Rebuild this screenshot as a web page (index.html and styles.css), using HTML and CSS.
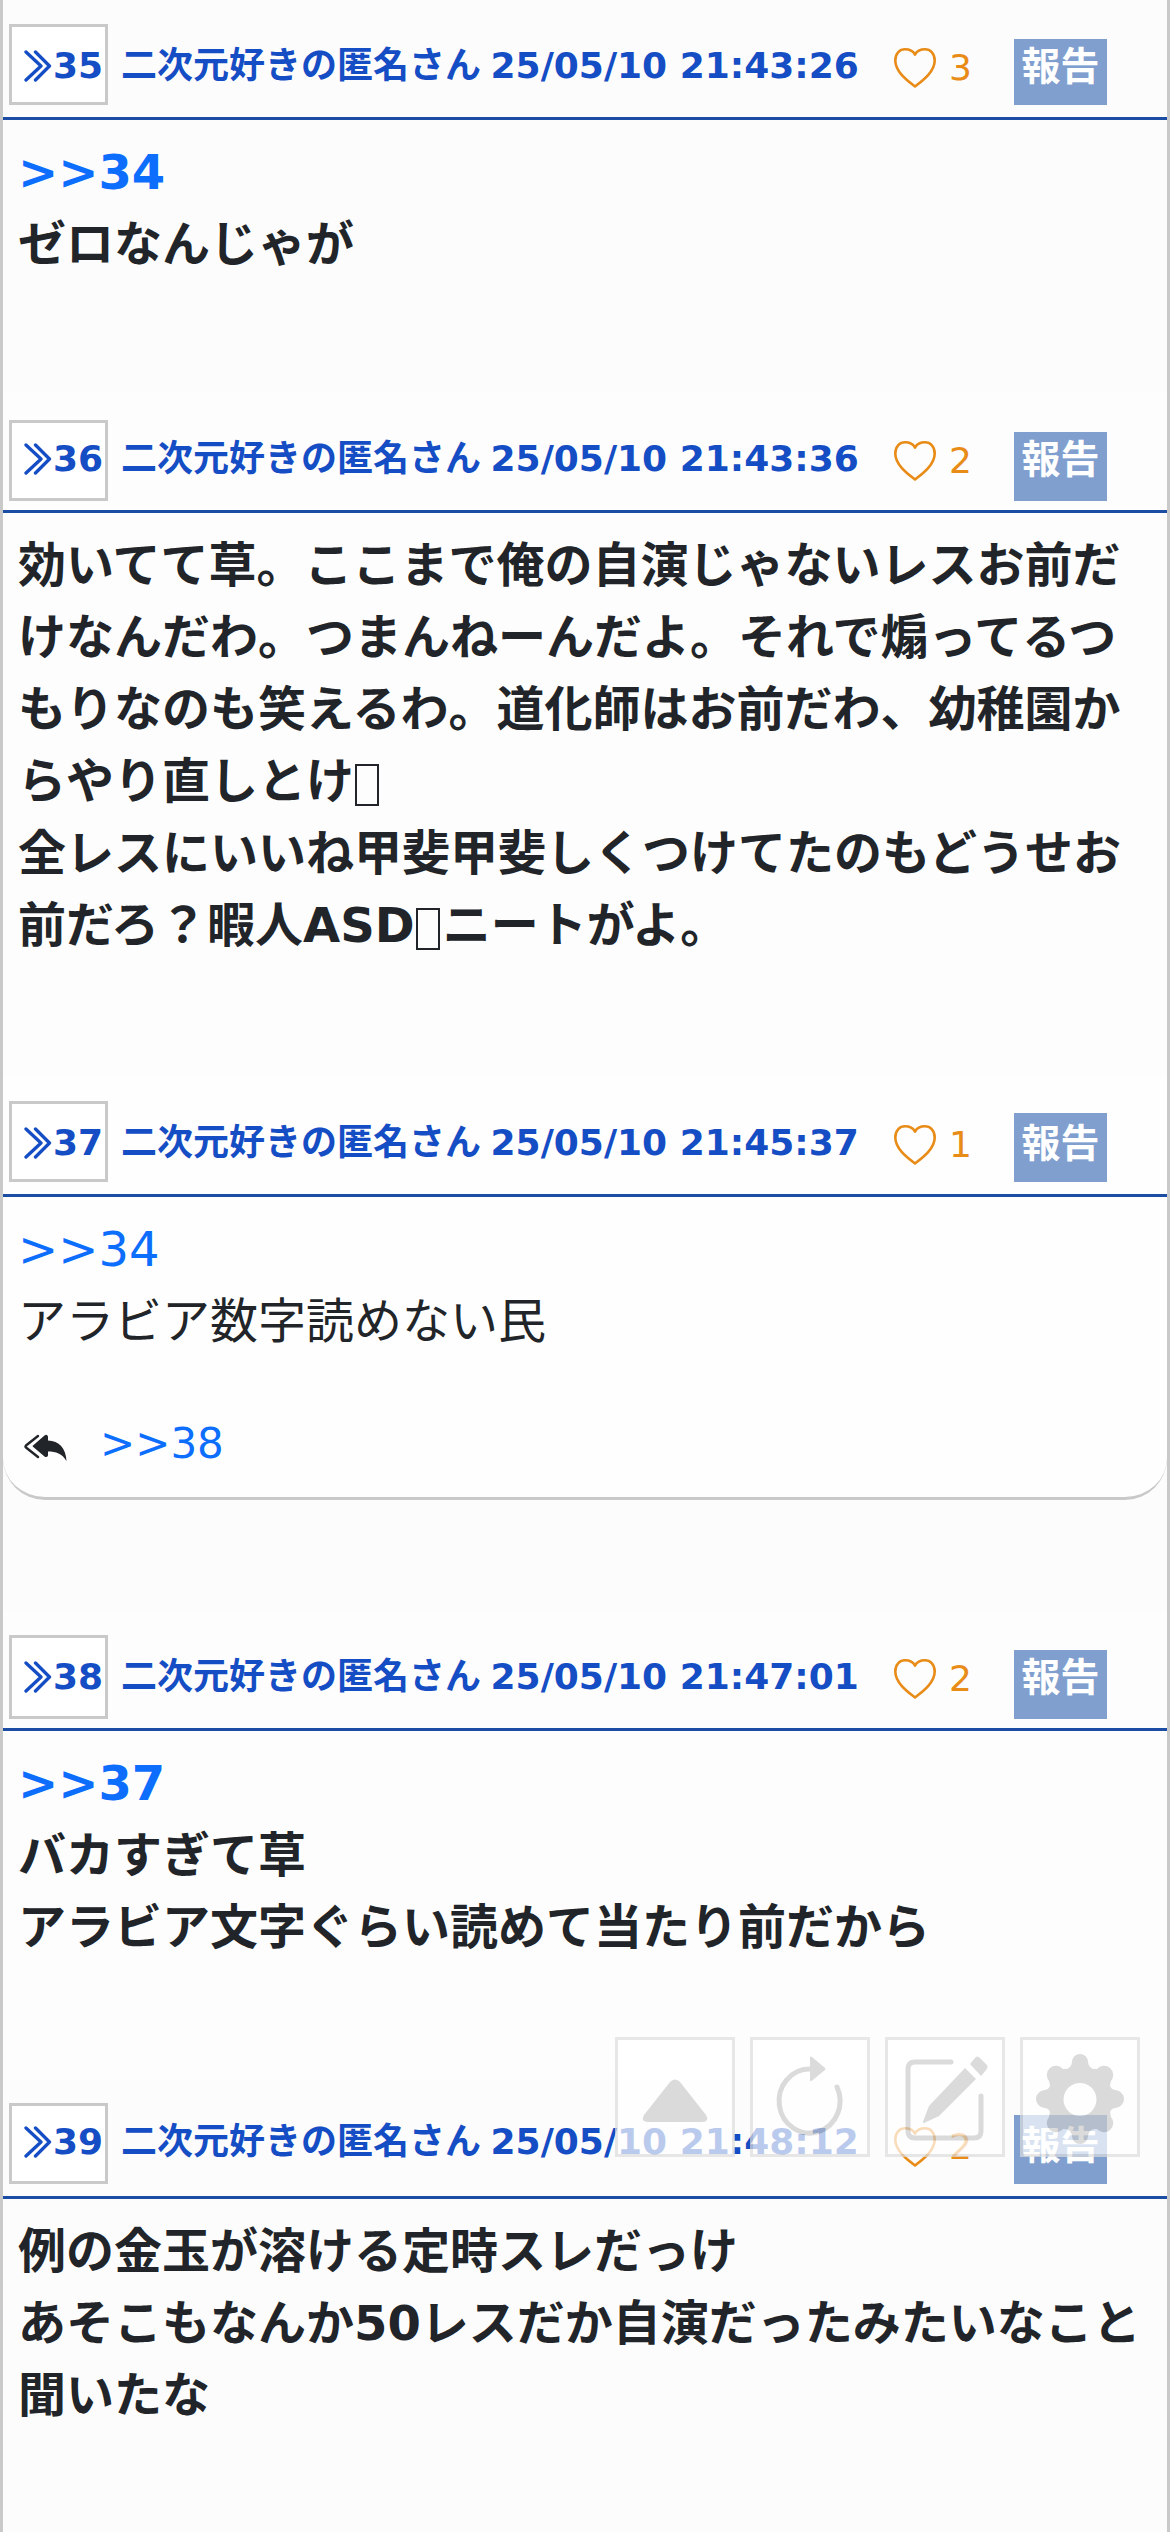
FILE: index.html
```
<!DOCTYPE html>
<html lang="ja">
<head>
<meta charset="utf-8">
<title>スレッド</title>
<link rel="stylesheet" href="styles.css">
</head>
<body>
<svg class="defs" aria-hidden="true">
  <symbol id="chev" viewBox="0 0 28 32"><path d="M2 2 17 16 2 30M11.500 2 25.500 16 11.500 30" fill="none" stroke="currentColor" stroke-width="3.300" stroke-linecap="round" stroke-linejoin="round"/></symbol>
  <symbol id="heart" viewBox="0 0 42 40"><path d="M21 38.500C14 33 1.300 24 1.300 12.500 1.300 5 6 1.300 11 1.300c5 0 8.500 2.500 10 5.300 1.500-2.800 5-5.300 10-5.300 5 0 9.700 3.700 9.700 11.200C40.700 24 28 33 21 38.500Z" fill="none" stroke="currentColor" stroke-width="2.600" stroke-linejoin="round"/></symbol>
</svg>
<main class="thread">
  <article class="post">
    <header class="head"><a class="num"><svg class="chev"><use href="#chev"/></svg>35</a><span class="meta">二次元好きの匿名さん <time>25/05/10 21:43:26</time></span><span class="like"><svg class="heart"><use href="#heart"/></svg>3</span><button class="report">報告</button></header>
    <div class="body bold"><a>&gt;&gt;34</a><br>ゼロなんじゃが</div>
  </article>
  <article class="post p36">
    <header class="head"><a class="num"><svg class="chev"><use href="#chev"/></svg>36</a><span class="meta">二次元好きの匿名さん <time>25/05/10 21:43:36</time></span><span class="like"><svg class="heart"><use href="#heart"/></svg>2</span><button class="report">報告</button></header>
    <div class="body bold">効いてて草。ここまで俺の自演じゃないレスお前だけなんだわ。つまんねーんだよ。それで煽ってるつもりなのも笑えるわ。道化師はお前だわ、幼稚園からやり直しとけ<i class="glyph-box"></i><br>全レスにいいね甲斐甲斐しくつけてたのもどうせお前だろ？暇人ASD<i class="glyph-box"></i>ニートがよ。</div>
  </article>
  <article class="post p37">
    <header class="head"><a class="num"><svg class="chev"><use href="#chev"/></svg>37</a><span class="meta">二次元好きの匿名さん <time>25/05/10 21:45:37</time></span><span class="like"><svg class="heart"><use href="#heart"/></svg>1</span><button class="report">報告</button></header>
    <div class="body"><a>&gt;&gt;34</a><br>アラビア数字読めない民</div>
    <div class="replies"><svg class="reply" viewBox="0 0 44 28"><path d="M14 2 2 11.500q-1 1 0 2L14 23" fill="none" stroke="currentColor" stroke-width="2.400" stroke-linecap="round"/><path d="M20.500 1.500q2.500-1.800 3.500 1v4C35 7 42 14 42.500 27 38 19.500 32 17.500 24 17.500v4q-1 2.500-3.500 1L9 12.800q-.8-.7 0-1.400Z"/></svg><a>&gt;&gt;38</a></div>
  </article>
  <article class="post p38">
    <header class="head"><a class="num"><svg class="chev"><use href="#chev"/></svg>38</a><span class="meta">二次元好きの匿名さん <time>25/05/10 21:47:01</time></span><span class="like"><svg class="heart"><use href="#heart"/></svg>2</span><button class="report">報告</button></header>
    <div class="body bold"><a>&gt;&gt;37</a><br>バカすぎて草<br>アラビア文字ぐらい読めて当たり前だから</div>
  </article>
  <article class="post p39">
    <header class="head"><a class="num"><svg class="chev"><use href="#chev"/></svg>39</a><span class="meta">二次元好きの匿名さん <time>25/05/10 21:48:12</time></span><span class="like"><svg class="heart"><use href="#heart"/></svg>2</span><button class="report">報告</button></header>
    <div class="body bold">例の金玉が溶ける定時スレだっけ<br>あそこもなんか50レスだか自演だったみたいなこと聞いたな</div>
  </article>
</main>
<nav class="tools">
  <button class="tool"><svg viewBox="0 0 120 120"><path d="M55 45q5-5 10 0L91 78q4 7-4 7H33q-8 0-4-7Z"/></svg></button>
  <button class="tool"><svg viewBox="0 0 120 120"><path d="M60 32A30.500 32 0 1 0 87 50" fill="none" stroke="currentColor" stroke-width="5" stroke-linecap="round"/><path d="M60 21v22q0 2 2 .5L75 33q1-1 0-2L62 20q-2-1.500-2 1Z"/></svg></button>
  <button class="tool"><svg viewBox="0 0 120 120"><path d="M66 25H30q-7 0-7 7v62q0 7 7 7h59q7 0 7-7V59" fill="none" stroke="currentColor" stroke-width="5" stroke-linecap="round"/><path d="M80 31 91 42 54 79 39 86q-2 1 0-4l5-13Zm5-4 5-6q2-3 5 0l6 6q3 3 0 6l-5 6Z"/></svg></button>
  <button class="tool"><svg viewBox="0 0 120 120"><path fill-rule="evenodd" d="M52 25a8 8 0 0 1 16 0q1 8 9 7a8.500 8.500 0 0 1 14 12q-3 8 4 9a8 8 0 0 1 0 18q-7 1-4 9a8.500 8.500 0 0 1-14 12q-8-1-9 7a8 8 0 0 1-16 0q-1-8-9-7a8.500 8.500 0 0 1-14-12q3-8-4-9a8 8 0 0 1 0-18q7-1 4-9a8.500 8.500 0 0 1 14-12q8 1 9-7ZM60 46a16.500 16.500 0 1 0 0 33a16.500 16.500 0 1 0 0-33Z"/></svg></button>
</nav>
</body>
</html>
```
FILE: styles.css
```
* { box-sizing: border-box; }
body { margin: 0; height: 2532px; overflow: hidden; font-family: "DejaVu Sans", "Noto Sans CJK JP", sans-serif; color: #212529; background: #fff; }
button { font: inherit; margin: 0; padding: 0; }
a { color: #0d6efd; }
.defs { display: none; }
.thread { height: 2532px; overflow: hidden; border: solid #c9c9c9; border-width: 0 3px; background: #fcfcfc; }
.post { height: 393px; --num-top: 24px; --num-h: 81px; --rep-top: 39px; --rep-h: 66px; --text-top: 45px; }
.head { height: 120px; display: flex; align-items: flex-start; padding-left: 6px; border-bottom: 3px solid #1b4da5; font-size: 36px; line-height: 42px; white-space: nowrap; flex: none; }
.num { width: 99px; height: var(--num-h); margin-top: var(--num-top); padding: calc(var(--text-top) - var(--num-top) - 3px) 0 0 12px; border: 3px solid #c9c9c9; background: #fff; color: #144dc4; font-weight: bold; display: flex; }
.chev { width: 28px; height: 32px; flex: none; margin: 5px 1px 0 0; }
.meta { width: 762px; margin: var(--text-top) 0 0 13px; color: #144dc4; font-weight: bold; }
.meta time { margin-left: -3px; }
.like { width: 131px; margin-top: 47px; display: flex; color: #e88b17; padding-left: 11px; }
.heart { width: 42px; height: 40px; margin: 1px 13px 0 0; flex: none; }
.report { width: 93px; height: var(--rep-h); margin-top: var(--rep-top); padding-top: calc(44px - var(--rep-top)); border: 0; background: #809fcf; color: #fff; font-size: 39px; line-height: 46px; font-weight: bold; display: flex; justify-content: center; }
.body { padding: 16px 15px 0; font-size: 48px; line-height: 72px; }
.bold { font-weight: bold; }
.glyph-box { display: inline-block; width: 24px; height: 42px; margin: 0 3px 0 1px; border: 2px solid currentColor; vertical-align: -8px; }
.p36 { height: 684px; --num-top: 27px; --rep-h: 69px; background: #fdfdfd; }
.p37 { height: 423px; margin-bottom: 111px; --rep-top: 36px; --rep-h: 69px; display: flex; flex-direction: column; background: #fefefe; border-bottom: 3px solid #c9c9c9; border-radius: 0 0 42px 42px; }
.p38 { height: 468px; --num-h: 84px; --rep-h: 69px; background: #fdfdfd; }
.p39 { height: 453px; --rep-top: 36px; --rep-h: 69px; --text-top: 42px; }
.replies { display: flex; align-items: center; margin-top: 55px; padding-left: 21px; font-size: 42px; line-height: 63px; gap: 32px; }
.reply { width: 44px; height: 28px; margin-top: 8px; fill: currentColor; }
.tools { position: fixed; left: 615px; top: 2037px; display: flex; gap: 15px; opacity: .7; }
.tool { width: 120px; height: 120px; border: 3px solid #ddd; background: #fff; color: #ccc; }
.tool svg { display: block; width: 120px; height: 120px; margin: -3px; fill: currentColor; }
```
